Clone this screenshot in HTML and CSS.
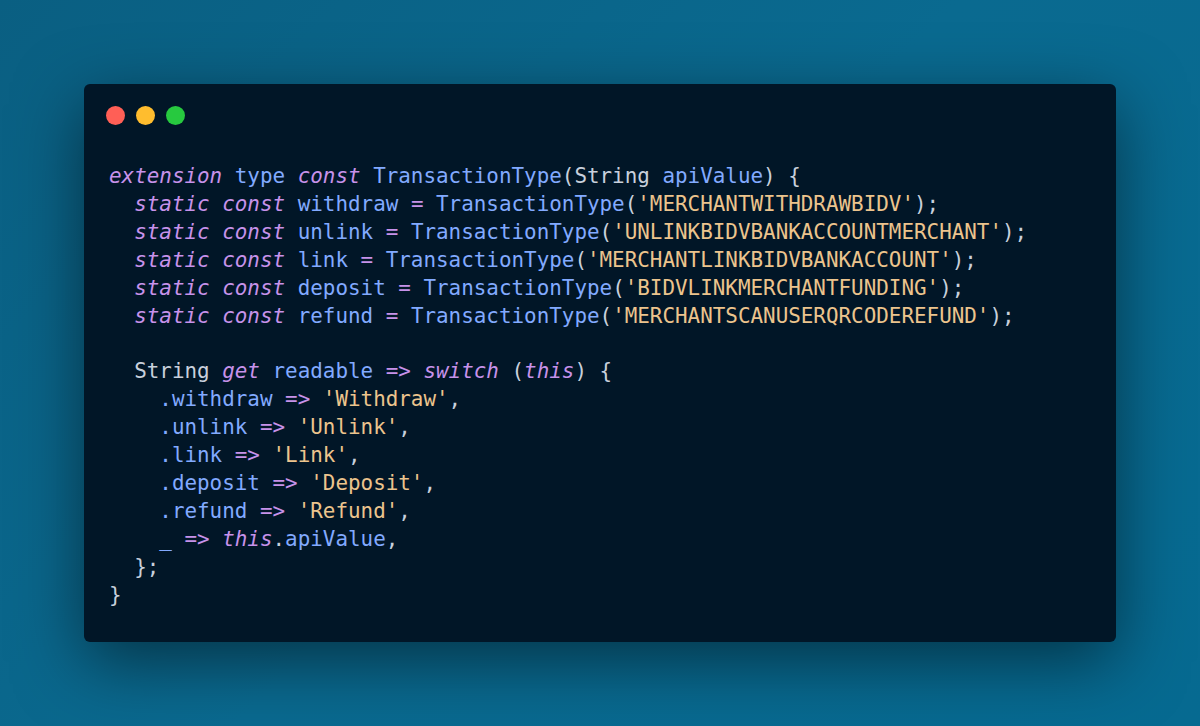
FILE: index.html
```html
<!DOCTYPE html>
<html>
<head>
<meta charset="utf-8">
<link rel="stylesheet" href="styles.css">
</head>
<body>
<div class="window">
  <div class="dots">
    <span class="dot red"></span>
    <span class="dot yellow"></span>
    <span class="dot green"></span>
  </div>
<pre class="code"><span class="kw">extension</span> <span class="fn">type</span> <span class="kw">const</span> <span class="fn">TransactionType</span><span class="p">(</span><span class="ty">String</span> <span class="fn">apiValue</span><span class="p">) {</span>
  <span class="kw">static</span> <span class="kw">const</span> <span class="fn">withdraw</span> <span class="op">=</span> <span class="fn">TransactionType</span><span class="p">(</span><span class="str">'MERCHANTWITHDRAWBIDV'</span><span class="p">);</span>
  <span class="kw">static</span> <span class="kw">const</span> <span class="fn">unlink</span> <span class="op">=</span> <span class="fn">TransactionType</span><span class="p">(</span><span class="str">'UNLINKBIDVBANKACCOUNTMERCHANT'</span><span class="p">);</span>
  <span class="kw">static</span> <span class="kw">const</span> <span class="fn">link</span> <span class="op">=</span> <span class="fn">TransactionType</span><span class="p">(</span><span class="str">'MERCHANTLINKBIDVBANKACCOUNT'</span><span class="p">);</span>
  <span class="kw">static</span> <span class="kw">const</span> <span class="fn">deposit</span> <span class="op">=</span> <span class="fn">TransactionType</span><span class="p">(</span><span class="str">'BIDVLINKMERCHANTFUNDING'</span><span class="p">);</span>
  <span class="kw">static</span> <span class="kw">const</span> <span class="fn">refund</span> <span class="op">=</span> <span class="fn">TransactionType</span><span class="p">(</span><span class="str">'MERCHANTSCANUSERQRCODEREFUND'</span><span class="p">);</span>

  <span class="ty">String</span> <span class="kw">get</span> <span class="fn">readable</span> <span class="op">=&gt;</span> <span class="kw">switch</span> <span class="p">(</span><span class="kw">this</span><span class="p">) {</span>
    <span class="fn">.withdraw</span> <span class="op">=&gt;</span> <span class="str">'Withdraw'</span><span class="p">,</span>
    <span class="fn">.unlink</span> <span class="op">=&gt;</span> <span class="str">'Unlink'</span><span class="p">,</span>
    <span class="fn">.link</span> <span class="op">=&gt;</span> <span class="str">'Link'</span><span class="p">,</span>
    <span class="fn">.deposit</span> <span class="op">=&gt;</span> <span class="str">'Deposit'</span><span class="p">,</span>
    <span class="fn">.refund</span> <span class="op">=&gt;</span> <span class="str">'Refund'</span><span class="p">,</span>
    <span class="fn">_</span> <span class="op">=&gt;</span> <span class="kw">this</span><span class="p">.</span><span class="fn">apiValue</span><span class="p">,</span>
  <span class="p">};</span>
<span class="p">}</span></pre>
</div>
</body>
</html>
```

FILE: styles.css
```css
html, body {
  margin: 0;
  padding: 0;
}
body {
  width: 1200px;
  height: 726px;
  box-sizing: border-box;
  padding: 84px;
  background: linear-gradient(135deg, #0a5f82 0%, #0a6a90 50%, #066a91 100%);
  display: flex;
}
.window {
  flex: 1;
  background: #011627;
  border-radius: 6px;
  box-shadow: 0 20px 68px rgba(0, 0, 0, 0.5);
  padding: 22px 25px 0 22px;
  display: flex;
  flex-direction: column;
}
.dots {
  display: flex;
  gap: 11px;
}
.dot {
  width: 19px;
  height: 19px;
  border-radius: 50%;
  display: block;
}
.red { background: #ff5f56; }
.yellow { background: #ffbd2e; }
.green { background: #27c93f; }
.code {
  margin: 38px 0 0 3px;
  font-family: "DejaVu Sans Mono", monospace;
  font-size: 20.9px;
  line-height: 27.9px;
  color: #d6deeb;
}
.kw { color: #c792ea; font-style: italic; }
.fn { color: #82aaff; }
.ty { color: #c8d0dc; }
.op { color: #c792ea; }
.str { color: #ecc48d; }
.p { color: #c8d0dc; }
```
